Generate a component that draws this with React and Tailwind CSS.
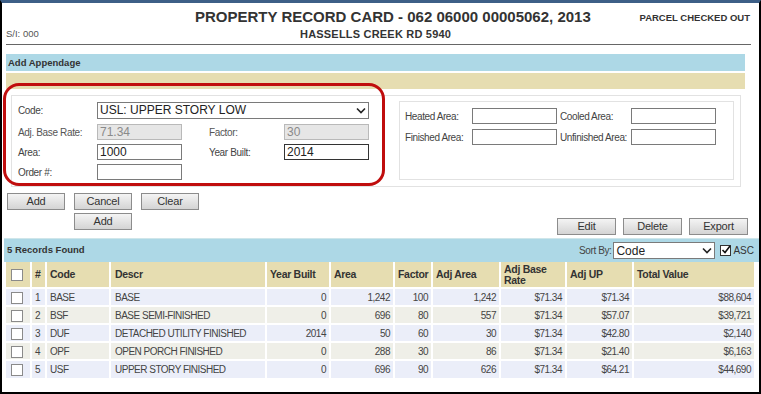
import React from "react";

const rows = [
  ["1", "BASE", "BASE", "0", "1,242", "100", "1,242", "$71.34", "$71.34", "$88,604"],
  ["2", "BSF", "BASE SEMI-FINISHED", "0", "696", "80", "557", "$71.34", "$57.07", "$39,721"],
  ["3", "DUF", "DETACHED UTILITY FINISHED", "2014", "50", "60", "30", "$71.34", "$42.80", "$2,140"],
  ["4", "OPF", "OPEN PORCH FINISHED", "0", "288", "30", "86", "$71.34", "$21.40", "$6,163"],
  ["5", "USF", "UPPER STORY FINISHED", "0", "696", "90", "626", "$71.34", "$64.21", "$44,690"],
];

const cols = [25, 15, 64, 156, 64, 64, 38, 68, 66, 67, 121];

const Box = () => (
  <span className="inline-block w-[12px] h-[12px] bg-white border border-[#8a8a8a] align-middle" />
);

const Btn = ({ children, w = "w-[58px]" }) => (
  <button
    className={`${w} h-[17px] text-[11px] tracking-[-0.2px] text-[#333] border border-[#8c8c8c] bg-gradient-to-b from-[#f4f4f4] to-[#d4d4d4] leading-none`}
  >
    {children}
  </button>
);

const Field = ({ value = "", disabled, dark, w = "w-[85px]" }) => (
  <div
    className={`${w} h-[16px] shrink-0 border ${dark ? "border-[#333]" : disabled ? "border-[#b9b9b9]" : "border-[#7a7a7a]"} ${disabled ? "bg-[#e6e6e6] text-[#8a8a8a]" : "bg-white text-[#222]"} text-[12px] tracking-normal leading-[14px] px-[2px]`}
  >
    {value}
  </div>
);

export default function App() {
  return (
    <div
      className="relative w-[761px] h-[394px] overflow-hidden bg-white border-t-[3px] border-t-[#3d5f87] border-x-2 border-b-2 border-x-black border-b-black text-[#333] whitespace-nowrap"
      style={{ fontFamily: '"Liberation Sans", Arial, sans-serif' }}
    >
      {/* header */}
      <div className="mx-[4px] w-[745px] border-b border-[#666] h-[42px]">
        <div className="flex items-start pt-[5px]">
          <div className="pl-[189px] text-[15px] font-bold text-[#333] leading-[18px]">
            PROPERTY RECORD CARD - 062 06000 00005062, 2013
          </div>
          <div className="ml-auto mr-[1px] mt-[4px] text-[9.5px] font-bold leading-[12px] text-[#333]">
            PARCEL CHECKED OUT
          </div>
        </div>
        <div className="flex items-end h-[14px]">
          <div className="text-[9.5px] text-[#555] leading-[12px] w-[294px]">S/I: 000</div>
          <div className="text-[11px] font-bold tracking-[0.2px] leading-[12px]">HASSELLS CREEK RD 5940</div>
        </div>
      </div>

      <div className="ml-[4px] w-[739px] mt-[9px]">
        <div className="h-[17px] bg-[#add8e6] text-[9.5px] font-bold leading-[17px] pl-[2px] text-[#333]">
          Add Appendage
        </div>
        <div className="h-[16px] mt-[2px] bg-[#e6ddb1]" />
      </div>

      {/* form area */}
      <div className="relative ml-[9px] mt-[6px] w-[730px] h-[92px] border border-[#e2e2e2] flex">
        <div className="w-[370px] pl-[6px] pt-[5px] text-[10px] tracking-[-0.35px] text-[#444]">
          <div className="flex items-center h-[18px]">
            <span className="w-[79px]">Code:</span>
            <div className="w-[272px] h-[17px] border border-[#7a7a7a] bg-white flex items-center px-[2px] text-[12px] tracking-normal text-[#222]">
              <span>USL: UPPER STORY LOW</span>
              <svg className="ml-auto" width="10" height="7" viewBox="0 0 10 7">
                <path d="M1 1.5 L5 5.5 L9 1.5" stroke="#222" strokeWidth="1.6" fill="none" />
              </svg>
            </div>
          </div>
          <div className="flex items-center h-[20px] mt-[3px]">
            <span className="w-[79px] text-[#555]">Adj. Base Rate:</span>
            <Field value="71.34" disabled />
            <span className="w-[102px] pl-[27px] text-[#555]">Factor:</span>
            <Field value="30" disabled />
          </div>
          <div className="flex items-center h-[20px]">
            <span className="w-[79px]">Area:</span>
            <Field value="1000" />
            <span className="w-[102px] pl-[27px]">Year Built:</span>
            <Field value="2014" dark />
          </div>
          <div className="flex items-center h-[20px]">
            <span className="w-[79px]">Order #:</span>
            <Field />
          </div>
        </div>
        <div className="ml-[17px] mt-[5px] w-[335px] h-[79px] border border-[#e2e2e2] pl-[5px] pt-[5px] text-[10px] tracking-[-0.4px] text-[#444]">
          <div className="flex items-center h-[18px]">
            <span className="w-[67px] shrink-0">Heated Area:</span>
            <Field />
            <span className="w-[74px] shrink-0 pl-[3px]">Cooled Area:</span>
            <Field />
          </div>
          <div className="flex items-center h-[18px] mt-[3px]">
            <span className="w-[67px] shrink-0">Finished Area:</span>
            <Field />
            <span className="w-[74px] shrink-0 pl-[3px]">Unfinished Area:</span>
            <Field />
          </div>
        </div>
        <div className="absolute left-[-9px] top-[-13px] w-[382px] h-[103px] rounded-[16px] border-[3px] border-[#c00d0d] pointer-events-none" />
      </div>

      {/* buttons */}
      <div className="flex mt-[6px] h-[45px]">
        <div className="ml-[5px] grid grid-cols-[58px_58px_58px] gap-x-[9px] gap-y-[3px] w-[200px] content-start">
          <Btn>Add</Btn>
          <Btn>Cancel</Btn>
          <Btn>Clear</Btn>
          <span />
          <Btn>Add</Btn>
        </div>
        <div className="ml-auto mr-[11px] mt-[25px] flex gap-[7px]">
          <Btn w="w-[59px]">Edit</Btn>
          <Btn w="w-[59px]">Delete</Btn>
          <Btn w="w-[59px]">Export</Btn>
        </div>
      </div>

      {/* records */}
      <div className="ml-[2px] w-[755px] border-t border-[#cfe6ea]">
        <div className="h-[23px] bg-[#add8e6] flex items-center pl-[3px] text-[9.5px] font-bold text-[#333]">
          <span>5 Records Found</span>
          <span className="ml-auto font-normal text-[10px] tracking-[-0.4px] text-[#444] mr-[2px]">Sort By:</span>
          <div className="w-[102px] h-[17px] border border-[#7a7a7a] bg-white flex items-center px-[2px] text-[12px] font-normal text-[#222]">
            <span>Code</span>
            <svg className="ml-auto" width="10" height="7" viewBox="0 0 10 7">
              <path d="M1 1.5 L5 5.5 L9 1.5" stroke="#222" strokeWidth="1.6" fill="none" />
            </svg>
          </div>
          <span className="ml-[5px] w-[11px] h-[11px] border border-[#333] bg-white relative">
            <svg className="absolute left-[0px] top-[-1px]" width="10" height="10" viewBox="0 0 10 10">
              <path d="M1.5 5 L4 7.5 L9 1" stroke="#111" strokeWidth="1.6" fill="none" />
            </svg>
          </span>
          <span className="ml-[2px] mr-[5px] font-normal text-[10px] text-[#333]">ASC</span>
        </div>
        <table className="ml-[2px] table-fixed border-collapse text-[10px] tracking-[-0.5px] text-[#444]" style={{ width: 748 }}>
          <colgroup>
            {cols.map((w, i) => (
              <col key={i} style={{ width: w }} />
            ))}
          </colgroup>
          <thead>
            <tr className="h-[26px] bg-[#e6ddb1] text-[#333] font-bold text-[10.5px] tracking-[-0.3px] leading-[11px]">
              <th className="border-r-2 border-white text-left pl-[5px]"><Box /></th>
              <th className="border-r-2 border-white text-left pl-[3px]">#</th>
              <th className="border-r-2 border-white text-left pl-[3px]">Code</th>
              <th className="border-r-2 border-white text-left pl-[4px]">Descr</th>
              <th className="border-r-2 border-white text-left pl-[3px]">Year Built</th>
              <th className="border-r-2 border-white text-left pl-[3px]">Area</th>
              <th className="border-r-2 border-white text-left pl-[3px]">Factor</th>
              <th className="border-r-2 border-white text-left pl-[3px]">Adj Area</th>
              <th className="border-r-2 border-white text-left pl-[3px] whitespace-normal">Adj Base<br />Rate</th>
              <th className="border-r-2 border-white text-left pl-[3px]">Adj UP</th>
              <th className="text-left pl-[3px]">Total Value</th>
            </tr>
          </thead>
          <tbody>
            {rows.map((r, i) => (
              <tr key={i} className={`h-[18px] border-t-2 border-white ${i % 2 ? "bg-[#efefe8]" : "bg-[#ebeef9]"}`}>
                <td className="border-r-2 border-white pl-[5px]"><Box /></td>
                <td className="border-r-2 border-white pl-[3px]">{r[0]}</td>
                <td className="border-r-2 border-white pl-[3px]">{r[1]}</td>
                <td className="border-r-2 border-white pl-[4px]">{r[2]}</td>
                {r.slice(3).map((v, j) => (
                  <td key={j} className={`${j < 6 ? "border-r-2 border-white" : ""} text-right pr-[3px]`}>
                    {v}
                  </td>
                ))}
              </tr>
            ))}
          </tbody>
        </table>
      </div>
    </div>
  );
}
